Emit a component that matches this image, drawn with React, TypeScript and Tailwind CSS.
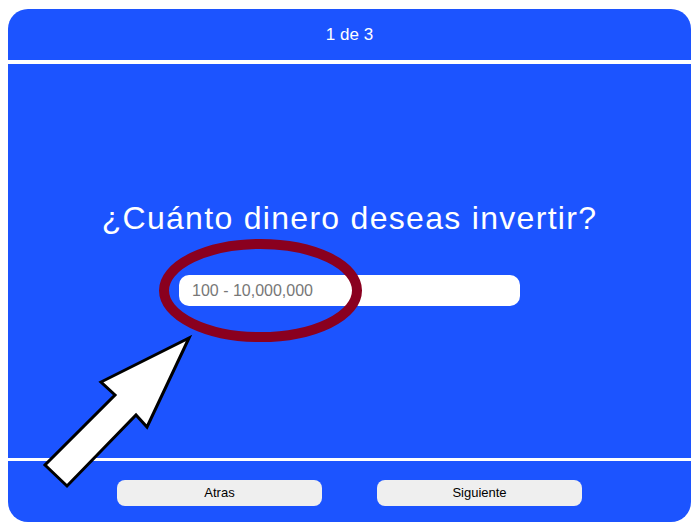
export default function App() {
  return (
    <div className="relative min-h-screen bg-white pl-[8px] pt-[9px] font-['Liberation_Sans',sans-serif]">
      <div className="flex h-[513px] w-[683px] flex-col overflow-hidden rounded-[20px] bg-white">
        <div className="flex h-[51px] items-center justify-center bg-[#1c54ff] text-[17px] text-white">
          1 de 3
        </div>
        <div className="mt-[4px] flex flex-1 flex-col items-center bg-[#1c54ff] pt-[134px]">
          <h1 className="text-[32px] leading-[40px] tracking-[1.3px] text-white">
            ¿Cuánto dinero deseas invertir?
          </h1>
          <input
            type="text"
            placeholder="100 - 10,000,000"
            className="mt-[37px] h-[31px] w-[341px] rounded-[10px] bg-white px-[13px] text-[16px] text-gray-700 outline-none placeholder:text-[#777]"
          />
        </div>
        <div className="mt-[3px] flex h-[61px] justify-center gap-[55px] bg-[#1c54ff] pt-[19px]">
          <button className="h-[26px] w-[205px] rounded-[8px] bg-[#efefef] text-[13px] text-black">
            Atras
          </button>
          <button className="h-[26px] w-[205px] rounded-[8px] bg-[#efefef] text-[13px] text-black">
            Siguiente
          </button>
        </div>
      </div>

      <svg
        className="pointer-events-none absolute left-0 top-0"
        width="699"
        height="528"
        viewBox="0 0 699 528"
      >
        <ellipse cx="260.5" cy="290.5" rx="96.5" ry="46.5" fill="none" stroke="#8a001f" strokeWidth="10" />
        <polygon
          points="189,338 147,427 136,415 67,486 45,465 115,395 101,382"
          fill="white"
          stroke="black"
          strokeWidth="3"
          strokeLinejoin="miter"
        />
      </svg>
    </div>
  );
}
